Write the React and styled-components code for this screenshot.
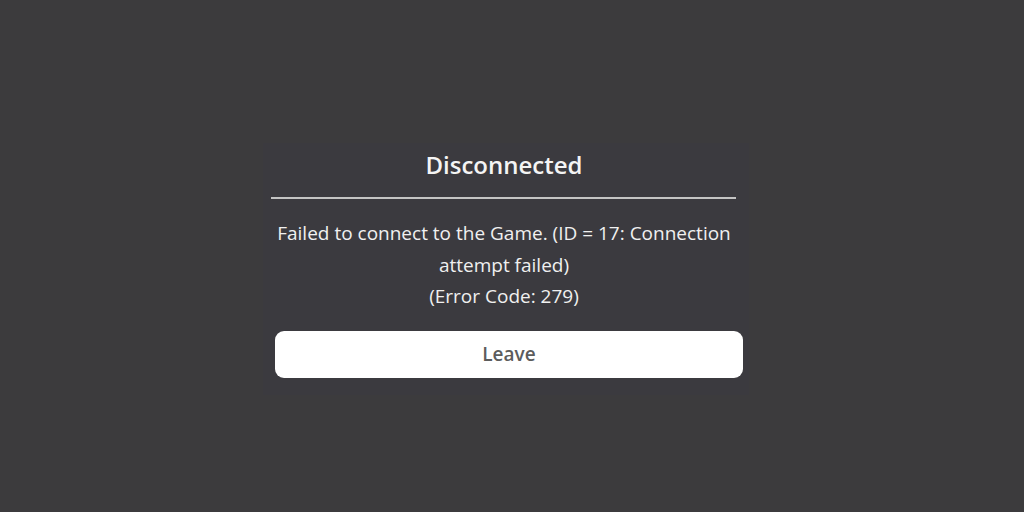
import styled, { createGlobalStyle } from "styled-components"

const GlobalStyle = createGlobalStyle`
    html, body {
        margin: 0;
        padding: 0;
        background-color: #3c3b3d;
    }
    body {
        font-family: "Open Sans", "Noto Sans", sans-serif;
    }
`

export default function App() {
    return (
        <Page>
            <GlobalStyle />
            <Dialog>
                <Title>Disconnected</Title>
                <Divider />
                <Message>
                    Failed to connect to the Game. (ID = 17: Connection attempt failed)
                    <br />
                    (Error Code: 279)
                </Message>
                <LeaveButton>Leave</LeaveButton>
            </Dialog>
        </Page>
    )
}

const Page = styled.main`
    width: 1024px;
    height: 512px;
    box-sizing: border-box;
    padding: 143px 0 0 263px;
    background-color: #3c3b3d;
    display: flex;
    align-items: flex-start;
`

const Dialog = styled.section`
    width: 486px;
    height: 252px;
    box-sizing: border-box;
    background-color: #3b3a3f;
    display: flex;
    flex-direction: column;
    align-items: center;
    color: #f2f2f2;
`

const Title = styled.h2`
    margin: 8px 0 0 -4px;
    height: 28px;
    line-height: 28px;
    font-size: 24px;
    font-weight: 600;
    color: #f4f4f4;
`

const Divider = styled.hr`
    width: 465px;
    height: 2px;
    margin: 18px 0 0 -6px;
    border: none;
    background-color: #c4c4c4;
`

const Message = styled.p`
    width: 480px;
    margin: 19px 0 0 -4px;
    font-size: 19px;
    line-height: 31.5px;
    text-align: center;
    color: #f0f0f0;
`

const LeaveButton = styled.button`
    width: 468px;
    height: 47px;
    margin: 18px 0 0 6px;
    border: none;
    border-radius: 9px;
    background-color: #ffffff;
    font-family: "Open Sans", "Noto Sans", sans-serif;
    font-size: 19px;
    font-weight: 600;
    color: #5c5c5c;
    cursor: pointer;
`
